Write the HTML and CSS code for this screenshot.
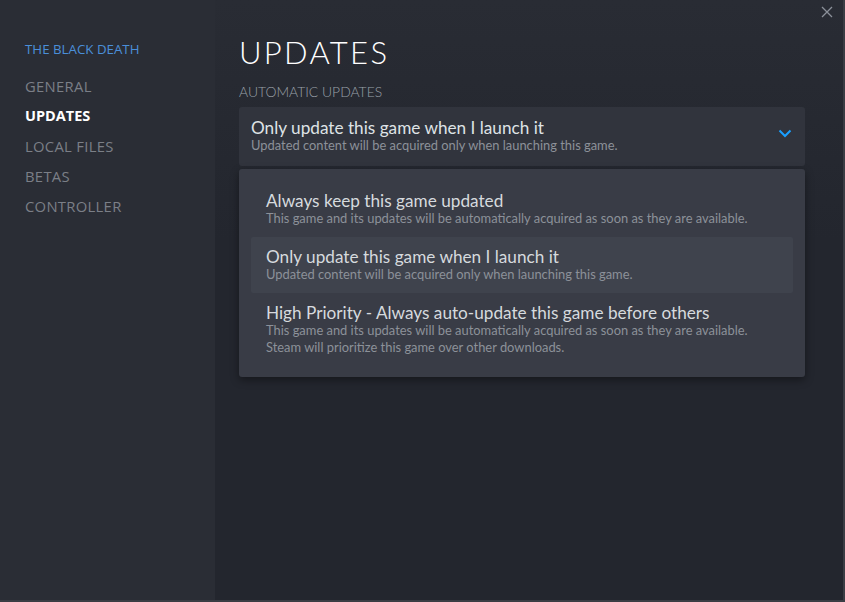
FILE: index.html
```html
<!DOCTYPE html>
<html>
<head>
<meta charset="utf-8">
<link rel="stylesheet" href="styles.css">
</head>
<body>
<div class="window">
  <aside class="sidebar">
    <div class="game-title">THE BLACK DEATH</div>
    <nav class="nav">
      <div class="nav-item">GENERAL</div>
      <div class="nav-item active">UPDATES</div>
      <div class="nav-item">LOCAL FILES</div>
      <div class="nav-item">BETAS</div>
      <div class="nav-item">CONTROLLER</div>
    </nav>
  </aside>
  <main class="content">
    <div class="close" aria-label="close">
      <svg width="12" height="12" viewBox="0 0 12 12"><path d="M1 1 L11 11 M11 1 L1 11" stroke="#8b9099" stroke-width="1.3" fill="none"/></svg>
    </div>
    <h1 class="heading">UPDATES</h1>
    <div class="section-label">AUTOMATIC UPDATES</div>
    <div class="select">
      <div class="select-text">
        <div class="opt-title">Only update this game when I launch it</div>
        <div class="opt-desc">Updated content will be acquired only when launching this game.</div>
      </div>
      <svg class="chevron" width="14" height="9" viewBox="0 0 14 9"><path d="M1.5 1.5 L7 7 L12.5 1.5" stroke="#1a9fff" stroke-width="2" fill="none"/></svg>
    </div>
    <div class="dropdown">
      <div class="option">
        <div class="opt-title">Always keep this game updated</div>
        <div class="opt-desc">This game and its updates will be automatically acquired as soon as they are available.</div>
      </div>
      <div class="option selected">
        <div class="opt-title">Only update this game when I launch it</div>
        <div class="opt-desc">Updated content will be acquired only when launching this game.</div>
      </div>
      <div class="option">
        <div class="opt-title">High Priority - Always auto-update this game before others</div>
        <div class="opt-desc">This game and its updates will be automatically acquired as soon as they are available.<br>Steam will prioritize this game over other downloads.</div>
      </div>
    </div>
  </main>
</div>
</body>
</html>
```

FILE: styles.css
```css
* { box-sizing: border-box; }
html, body { margin: 0; padding: 0; }
body {
  width: 845px;
  height: 602px;
  overflow: hidden;
  background: #23262e;
  font-family: Lato, "Open Sans", sans-serif;
}
.window {
  display: flex;
  width: 845px;
  height: 602px;
  border-right: 2px solid #3a3d44;
  border-bottom: 2px solid #3a3d44;
}
.sidebar {
  width: 215px;
  flex: none;
  background: #2a2d35;
  padding: 41px 0 0 25px;
}
.game-title {
  font-family: "Open Sans", sans-serif;
  font-size: 13.3px;
  color: #4a8fd9;
  line-height: 16px;
  margin-bottom: 14px;
}
.nav { display: flex; flex-direction: column; }
.nav-item {
  font-family: "Open Sans", sans-serif;
  font-size: 14.8px;
  line-height: 30px;
  color: #7b7f87;
  letter-spacing: 0.3px;
}
.nav-item.active { color: #ffffff; font-weight: 700; letter-spacing: 0; font-size: 14.5px; }
.content {
  position: relative;
  flex: 1;
  padding: 34px 38px 0 24px;
  background: linear-gradient(180deg, #292c34 0%, #23262e 40%, #23262e 100%);
}
.close {
  position: absolute;
  top: 6px;
  right: 10px;
  width: 12px;
  height: 12px;
}
.close svg { display: block; }
.heading {
  margin: 0;
  font-family: Lato, sans-serif;
  font-weight: 300;
  font-size: 31px;
  letter-spacing: 2.3px;
  line-height: 36px;
  color: #ffffff;
}
.section-label {
  margin-top: 13px;
  font-family: Lato, sans-serif;
  font-weight: 300;
  font-size: 13.9px;
  color: #9aa0a8;
  line-height: 18px;
}
.select {
  margin-top: 6px;
  width: 566px;
  height: 59px;
  background: #31343d;
  border-radius: 3px;
  display: flex;
  align-items: center;
  justify-content: space-between;
  padding: 0 13px 1px 12px;
}
.chevron { display: block; margin-bottom: 5px; }
.opt-title {
  font-size: 17.2px;
  color: #dfe3e6;
  line-height: 19px;
}
.opt-desc {
  font-size: 12.9px;
  color: #8c9199;
  line-height: 17px;
}
.dropdown {
  margin-top: 3px;
  width: 566px;
  height: 208px;
  background: #393c46;
  border-radius: 3px;
  padding: 12px 12px 0 12px;
  box-shadow: 0 3px 8px rgba(0,0,0,0.4);
}
.option {
  padding: 10px 15px 0 15px;
  min-height: 56px;
  border-radius: 2px;
}
.option.selected { background: #3f434d; }
.option .opt-title { color: #d6dade; }
```
